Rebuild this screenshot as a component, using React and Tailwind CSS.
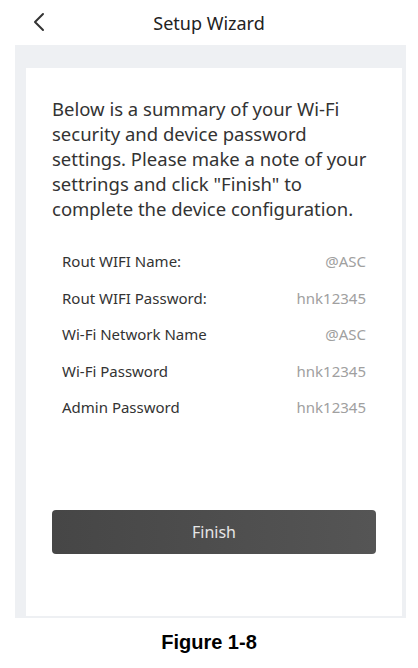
import React from "react";

const rows = [
  ["Rout WIFI Name:", "@ASC"],
  ["Rout WIFI Password:", "hnk12345"],
  ["Wi-Fi Network Name", "@ASC"],
  ["Wi-Fi Password", "hnk12345"],
  ["Admin Password", "hnk12345"],
];

export default function App() {
  return (
    <div
      className="w-[418px] h-[668px] bg-white flex flex-col"
      style={{ fontFamily: '"Noto Sans", Roboto, sans-serif' }}
    >
      {/* Top bar */}
      <div className="relative h-[45px] flex items-center justify-center">
        <svg
          className="absolute left-[30px] top-[12px] w-[18px] h-[20px] text-[#333]"
          viewBox="0 0 18 20"
          fill="none"
          stroke="currentColor"
          strokeWidth="2"
          strokeLinecap="round"
          strokeLinejoin="round"
        >
          <path d="M13 2L5 10l8 8" />
        </svg>
        <h1 className="text-[18px] text-[#222] leading-none">Setup Wizard</h1>
      </div>

      {/* Frame */}
      <div className="mx-[15px] w-[391px] h-[573px] bg-[#eef0f3] pt-[23px] pl-[11px] pr-[4px] pb-[2px] flex">
        <div className="flex-1 bg-white flex flex-col px-[26px] pt-[28px]">
          <p className="text-[18.5px] leading-[25px] text-[#333]">
            Below is a summary of your Wi-Fi security and device password
            settings. Please make a note of your settrings and click "Finish"
            to complete the device configuration.
          </p>

          <div className="mt-[22px] px-[10px] flex flex-col">
            {rows.map(([label, value]) => (
              <div
                key={label}
                className="h-[36.5px] flex items-center justify-between text-[15px]"
              >
                <span className="text-[#333]">{label}</span>
                <span className="text-[#a0a0a0]">{value}</span>
              </div>
            ))}
          </div>

          <button className="mt-[84px] h-[44px] w-full rounded-[4px] bg-gradient-to-r from-[#464646] to-[#555] text-[#e6e6e6] text-[16px]">
            Finish
          </button>
        </div>
      </div>

      <div
        className="flex-1 flex items-center justify-center font-bold text-[20px] text-black pb-[2px]"
        style={{ fontFamily: '"Liberation Sans", Arial, sans-serif' }}
      >
        Figure 1-8
      </div>
    </div>
  );
}
